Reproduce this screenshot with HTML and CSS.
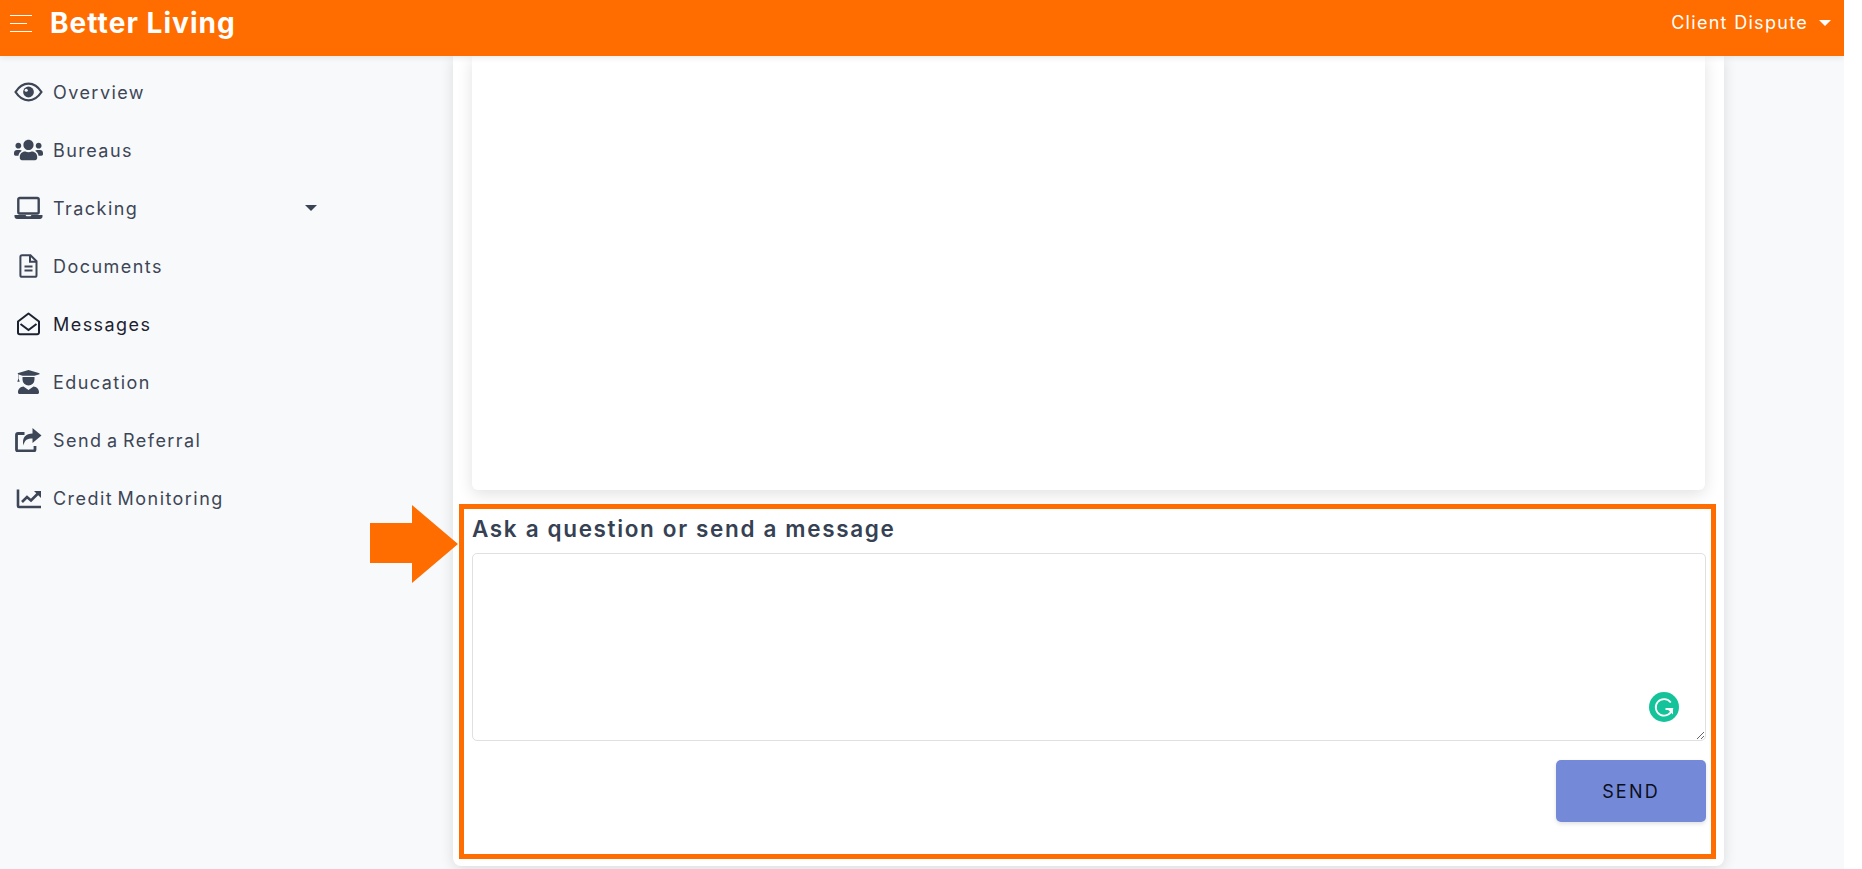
FILE: index.html
```html
<!DOCTYPE html>
<html lang="en">
<head>
  <meta charset="UTF-8" />
  <title>Better Living - Messages</title>
  <link rel="stylesheet" href="styles.css">
</head>
<body>
  <div class="page">
    <!-- Top bar -->
    <header class="topbar">
      <div class="burger"><span></span><span class="short"></span><span></span></div>
      <div class="brand">Better Living</div>
      <div class="client">Client Dispute <i class="caret caret-white"></i></div>
    </header>

    <div class="layout">
      <!-- Sidebar -->
      <nav class="sidebar">
        <a class="nav-item">
          <svg class="icon" viewBox="0 0 28 20"><path d="M1.500 10C5 4.500 9 2 14 2s9 2.500 12.500 8C23 15.500 19 18 14 18S5 15.500 1.500 10z" fill="none" stroke="currentColor" stroke-width="2.200"/><circle cx="14" cy="10" r="5.200" fill="currentColor"/><circle cx="11.800" cy="8.300" r="1.500" fill="#f8f9fb"/></svg>
          Overview
        </a>
        <a class="nav-item">
          <svg class="icon" viewBox="0 0 640 512"><path fill="currentColor" d="M96 224c35.300 0 64-28.700 64-64s-28.700-64-64-64-64 28.700-64 64 28.700 64 64 64zm448 0c35.300 0 64-28.700 64-64s-28.700-64-64-64-64 28.700-64 64 28.700 64 64 64zm32 32h-64c-17.600 0-33.500 7.100-45.100 18.600 40.300 22.100 68.900 62 75.100 109.400h66c17.700 0 32-14.300 32-32v-32c0-35.300-28.700-64-64-64zm-256 0c61.900 0 112-50.100 112-112S381.900 32 320 32 208 82.100 208 144s50.100 112 112 112zm76.800 32h-8.300c-20.800 10-43.900 16-68.500 16s-47.600-6-68.500-16h-8.300C179.600 288 128 339.600 128 403.200V432c0 26.500 21.500 48 48 48h288c26.500 0 48-21.500 48-48v-28.800c0-63.600-51.600-115.200-115.200-115.200zm-223.700-13.400C161.500 263.100 145.600 256 128 256H64c-35.300 0-64 28.700-64 64v32c0 17.700 14.300 32 32 32h65.900c6.300-47.400 34.900-87.300 75.200-109.400z"/></svg>
          Bureaus
        </a>
        <a class="nav-item">
          <svg class="icon" viewBox="0 0 28 24"><rect x="3.800" y="2" width="20.400" height="15.500" rx="1.500" fill="none" stroke="currentColor" stroke-width="2.400"/><path fill="currentColor" d="M0 19h11l1 1.200h4l1-1.200h11v1.500c0 1.500-1.200 2.500-2.500 2.500h-23C1.200 23 0 22 0 20.500z"/></svg>
          Tracking
          <i class="caret"></i>
        </a>
        <a class="nav-item">
          <svg class="icon" viewBox="0 0 28 24"><path d="M7.500 1.200h8.500l6 6v14a1.600 1.600 0 0 1-1.600 1.600H7.500a1.600 1.600 0 0 1-1.600-1.600V2.800a1.600 1.600 0 0 1 1.600-1.600z" fill="none" stroke="currentColor" stroke-width="2"/><path d="M15.500 1.500v6.200H22M10 12.500h8M10 16.500h8" fill="none" stroke="currentColor" stroke-width="2"/></svg>
          Documents
        </a>
        <a class="nav-item active">
          <svg class="icon" viewBox="0 0 28 24"><path d="M3.500 9.500 14 1.500l10.500 8v11a1.800 1.800 0 0 1-1.800 1.800H5.300a1.800 1.800 0 0 1-1.800-1.800z" fill="none" stroke="currentColor" stroke-width="2" stroke-linejoin="round"/><path d="m6 12 8 6 8-6" fill="none" stroke="currentColor" stroke-width="2"/></svg>
          Messages
        </a>
        <a class="nav-item">
          <svg class="icon" viewBox="0 0 28 24"><path fill="currentColor" d="M14 0 25 3.200v1L20 5.700H8L4.200 4.500v4.300l1 3H2.800l1-3V4.200L3 3.200zM8 7h12v2.500a6 6 0 0 1-12 0zM9 16.500l5 3.500 5-3.500c3 .3 5.500 2.600 5.500 5.500v.5c0 .8-.7 1.500-1.500 1.500H5c-.8 0-1.500-.7-1.500-1.500V22c0-2.900 2.500-5.200 5.500-5.500z"/></svg>
          Education
        </a>
        <a class="nav-item">
          <svg class="icon" viewBox="0 0 28 24"><path d="M10 5.500H3.500a1.500 1.500 0 0 0-1.500 1.500v14.500A1.500 1.500 0 0 0 3.500 23H19a1.500 1.500 0 0 0 1.500-1.500V18" fill="none" stroke="currentColor" stroke-width="2.800"/><path fill="currentColor" d="M18 0l9 7.500-9 7.500v-4.500c-5 0-8 1-9 7-2-8 2.500-12 9-12z"/></svg>
          Send a Referral
        </a>
        <a class="nav-item">
          <svg class="icon" viewBox="0 0 28 24"><path d="M3.500 3.500V20a1 1 0 0 0 1 1h22" fill="none" stroke="currentColor" stroke-width="2.600"/><path d="m7.500 16 5-5 4 3.500 7-7" fill="none" stroke="currentColor" stroke-width="2.600"/><path fill="currentColor" d="M19.500 5h7v7z"/></svg>
          Credit Monitoring
        </a>
      </nav>

      <!-- Conversation card -->
      <main class="card">
        <div class="thread"></div>
        <section class="compose">
          <h3>Ask a question or send a message</h3>
          <div class="box-wrap">
            <textarea class="message-box"></textarea>
            <div class="grammarly">
              <svg viewBox="0 0 30 30" width="30" height="30"><path d="M21.800 10.500a8.300 8.300 0 1 0 1.400 6.500h-6.700" fill="none" stroke="#fff" stroke-width="1.800"/><path fill="#fff" d="M17.500 16.500h6.500v6z"/></svg>
            </div>
          </div>
          <div class="actions">
            <button type="button" class="send-btn">SEND</button>
          </div>
        </section>
      </main>
    </div>

    <!-- Annotation arrow -->
    <svg class="arrow" width="88" height="78" viewBox="0 0 88 78"><path fill="#ff6d00" d="M42 0l46 39-46 39V58H0V18h42z"/></svg>
  </div>
</body>
</html>
```

FILE: styles.css
```css
* { margin:0; padding:0; box-sizing: border-box; font-family: 'Inter', 'Open Sans', sans-serif; }
html, body { height: 100%; overflow: hidden; background: #fff; }
.page {
  position: relative;
  width: 1844px;
  height: 869px;
  background: #f8f9fb;
  overflow: hidden;
}
.topbar {
  height: 56px;
  background: #ff6d00;
  color: #fff;
  display: flex;
  align-items: flex-start;
  padding: 9px 13px 0 10px;
  position: relative;
  z-index: 2;
  box-shadow: 0 2px 6px rgba(0,0,0,0.08);
}
.burger {
  width: 22px;
  margin-top: 6px;
  display: flex;
  flex-direction: column;
  gap: 7px;
}
.burger span { display: block; height: 1px; background: #fff; }
.burger .short { width: 17px; }
.brand {
  margin-left: 18px;
  font-size: 28px;
  line-height: 28px;
  font-weight: 700;
  letter-spacing: 1.05px;
}
.client {
  margin-left: auto;
  font-size: 18px;
  line-height: 28px;
  letter-spacing: 1.3px;
  display: flex;
  align-items: center;
  gap: 4px;
}
.caret {
  display: inline-block;
  width: 0;
  height: 0;
  border-left: 6px solid transparent;
  border-right: 6px solid transparent;
  border-top: 6px solid #3a4454;
  margin-left: auto;
}
.caret-white { border-top-color: #fff; margin-left: 7px; margin-right: 0; }
.layout { display: flex; height: 813px; }
.sidebar { width: 453px; padding: 7px 0 0 14px; }
.nav-item {
  display: flex;
  align-items: center;
  gap: 10px;
  width: 303px;
  height: 58px;
  font-size: 18px;
  color: #3d4656;
  letter-spacing: 1.45px;
  word-spacing: -2px;
}
.nav-item.active { color: #1c2230; }
.icon { width: 29px; height: 24px; flex: none; }
.card {
  width: 1271px;
  height: 810px;
  background: #fff;
  border-radius: 0 0 8px 8px;
  box-shadow: 0 3px 14px rgba(0,0,0,0.12);
  padding: 0 8px 0 6px;
}
.thread {
  width: 1233px;
  height: 434px;
  margin: 0 0 14px 13px;
  background: #fff;
  border-radius: 0 0 6px 6px;
  box-shadow: 0 4px 16px rgba(0,0,0,0.12);
}
.compose {
  width: 1257px;
  height: 355px;
  border: 5px solid #ff6d00;
  padding: 5px 5px 0 8px;
}
h3 {
  font-size: 22.5px;
  line-height: 29px;
  font-weight: 600;
  color: #364153;
  letter-spacing: 1.65px;
  margin-bottom: 10px;
}
.box-wrap { position: relative; height: 188px; }
.message-box {
  display: block;
  width: 100%;
  height: 188px;
  border: 1px solid #e0e0e0;
  border-radius: 5px;
  background: #fff;
  outline: none;
}
.grammarly {
  position: absolute;
  left: 1177px;
  top: 139px;
  width: 30px;
  height: 30px;
  border-radius: 50%;
  background: #15c39a;
}
.actions { display: flex; justify-content: flex-end; margin-top: 19px; }
.send-btn {
  width: 150px;
  height: 62px;
  background: #7489d8;
  border: none;
  border-radius: 5px;
  color: #0b0f1c;
  font-size: 18px;
  letter-spacing: 2.2px;
  box-shadow: 0 2px 4px rgba(0,0,0,0.12);
}
.arrow { position: absolute; left: 370px; top: 505px; z-index: 3; }
```
